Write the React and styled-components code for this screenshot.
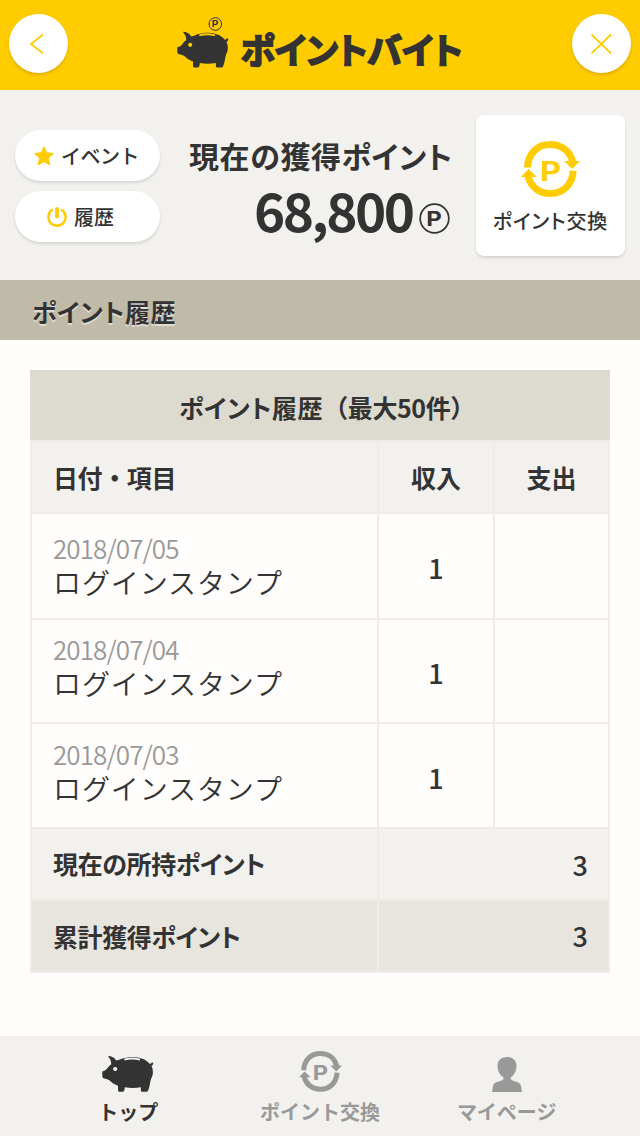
import React from "react";
import styled, { createGlobalStyle } from "styled-components";

const CSSReset = createGlobalStyle`
    * {
        margin: 0;
        padding: 0;
        box-sizing: border-box;
    }

    body {
        background: #fffefc;
        color: #333;
        font-family: "Noto Sans CJK JP", "Noto Sans", sans-serif;
    }

    button {
        border: 0;
        font-family: inherit;
        color: inherit;
    }

    svg {
        display: block;
        flex-shrink: 0;
    }
`;

const history = [
    { date: "2018/07/05", item: "ログインスタンプ", income: 1, lift: 2 },
    { date: "2018/07/04", item: "ログインスタンプ", income: 1, lift: 10 },
    { date: "2018/07/03", item: "ログインスタンプ", income: 1, lift: 10 },
];

const StyledPage = styled.div`
    width: 640px;
    height: 1136px;
    display: flex;
    flex-direction: column;
    overflow: hidden;
`;

const Label = styled.span`
    display: block;
    white-space: nowrap;
    font-size: ${({ $size }) => $size}px;
    line-height: ${({ $line }) => $line || 30}px;
    font-weight: ${({ $weight }) => $weight || 500};
    letter-spacing: ${({ $track }) => $track || 0}px;
    font-feature-settings: ${({ $palt }) => ($palt ? '"palt"' : "normal")};
`;

const StyledHeader = styled.header`
    height: 90px;
    background: #ffcc00;
    display: flex;
    justify-content: space-between;
    padding: 14px 9px 0 9px;
`;

const RoundButton = styled.button`
    width: 59px;
    height: 59px;
    border-radius: 50%;
    background: #fff;
    box-shadow: 0 2px 3px rgba(120, 80, 0, 0.25);
`;

const Brand = styled.div`
    display: flex;
    padding-top: 2px;
    width: 291px;
    gap: 12px;
    margin-left: 4px;
`;

const BrandName = styled(Label)`
    margin-top: 8px;
    -webkit-text-stroke: 1.8px #333;
    stroke-linejoin: round;
`;

const StyledStatus = styled.section`
    height: 190px;
    background: #f2f1ee;
    display: flex;
    justify-content: space-between;
    padding: 25px 15px 0;
`;

const PillColumn = styled.div`
    display: flex;
    flex-direction: column;
    gap: 10px;
    padding-top: 15px;
`;

const Pill = styled.button`
    width: 145px;
    height: 51px;
    border-radius: 26px;
    background: #fff;
    box-shadow: 0 2px 3px rgba(0, 0, 0, 0.12);
    display: flex;
    align-items: center;
    gap: 7px;
    padding-left: ${({ $indent }) => $indent}px;
`;

const Balance = styled.div`
    width: 261px;
    padding-top: 20px;
    margin-right: -3px;
`;

const Amount = styled.div`
    display: flex;
    padding-left: 65px;
    gap: 6px;
    height: 60px;
    margin-top: 4px;

    svg {
        margin-top: 24px;
    }
`;

const ExchangeCard = styled.button`
    width: 149px;
    height: 141px;
    border-radius: 8px;
    background: #fff;
    box-shadow: 0 2px 3px rgba(0, 0, 0, 0.12);
    display: flex;
    flex-direction: column;
    align-items: center;
    padding-top: 26px;
    gap: 9px;
`;

const SectionBar = styled.h2`
    height: 60px;
    background: #c0baa8;
    padding: 16px 0 0 32px;
    text-shadow: 0 2px 0 rgba(255, 255, 255, 0.5);
`;

const StyledMain = styled.main`
    flex: 1;
    padding: 30px 30px 0;
`;

const Caption = styled.div`
    height: 70px;
    background: #dddbcf;
    display: flex;
    padding: 22px 0 0 149px;
`;

const Table = styled.div`
    display: grid;
    grid-template-columns: 345px 114px 113px;
    grid-template-rows: 70px 104px 102px 103px 70px 70px;
    gap: 2px;
    padding: 2px;
    background: #edece7;
`;

const tones = {
    head: "#f2f1ee",
    plain: "#fffefc",
    total: "#e8e5df",
};

const Cell = styled.div`
    background: ${({ $tone }) => tones[$tone || "plain"]};
    grid-column: span ${({ $span }) => $span || 1};
    display: flex;
    flex-direction: column;
    justify-content: center;
    align-items: ${({ $align }) => $align || "center"};
    padding: ${({ $drop }) => $drop || 0}px 21px ${({ $lift }) => $lift || 0}px;
`;

const DateLabel = styled(Label)`
    color: #999;
`;

const StyledFooter = styled.nav`
    height: 100px;
    background: #f2f1ee;
    display: flex;
    padding: 16px 40px 0 34px;
`;

const Tab = styled.a`
    flex: 1;
    display: flex;
    flex-direction: column;
    align-items: center;
    padding-left: ${({ $nudge }) => $nudge || 0}px;
    color: ${({ $active }) => ($active ? "#333" : "#999")};
`;

const TabIcon = styled.div`
    height: 40px;
    display: flex;
    align-items: flex-end;
    margin-bottom: 5px;
`;

// corpo do porquinho, a moeda fica por conta de quem usa
function PigShape({ hole }) {
    return (
        <>
            <path
                fill="#333"
                d="M6 0C9.5 .2 12.6 1.5 14.2 4.6Q17 4.2 20.5 2.5C29 -.4 40 .6 45.3 5.4Q47.3 7.1 48 8.3Q49.2 8.2 48.5 6.6L49.8 7.2L50.7 6.2L51.4 7.6Q50.9 9.3 49.5 10C51.5 14 51.3 19 49.2 22.5C48 25 48 30 46.5 33.5Q46 35.8 44.5 35.8H40Q38.8 35.6 38.9 34.2V31.2Q31 32.5 22.8 31.3L22.5 33.8Q22 35.8 20.8 35.8H17.2Q16 35.6 16 34.2V29.8C12 28.5 8.5 25.5 7 24Q4.5 22.6 1.5 22.2Q.4 22 .3 20V15.5Q4 14.6 5.2 12.6Q7 9.7 9.3 8.2Q9.4 4 6 0Z"
            />
            <circle cx="13.2" cy="13" r="2.1" fill={hole} />
            <path d="M22.3 3.6Q30 1.4 38 3.6" fill="none" stroke={hole} strokeWidth="2" />
        </>
    );
}

// "P" largo, a linha de base fica em (x, y)
function WideP({ x, y, size, stretch = 1.2 }) {
    return (
        <g transform={`translate(${x} ${y}) scale(${stretch} 1)`}>
            <text fontFamily="Inter" fontWeight="700" fontSize={size}>P</text>
        </g>
    );
}

function BrandPig() {
    return (
        <svg width="52" height="53" viewBox="0 0 52 53" fill="#333">
            <circle cx="38.3" cy="8" r="6.3" fill="none" stroke="#333" strokeWidth="1" />
            <WideP x={34.8} y={10.9} size={8.5} />
            <g transform="translate(0 15.8)">
                <PigShape hole="#ffcc00" />
            </g>
        </svg>
    );
}

function ExchangeIcon({ size, color }) {
    return (
        <svg width={size} height={size * 56 / 59} viewBox="0 0 59 56" fill={color}>
            <g fill="none" stroke={color} strokeWidth="7">
                <path d="M6.5 26.5C6.8 13 16 3.5 29.3 3.5C41 3.5 49.5 10.5 51.8 21.5" />
                <path d="M52.2 29.7C51.5 43 42.5 52.5 29.3 52.5C18 52.5 9.3 45.5 7 34.8" />
            </g>
            <path d="M43 20H59L51.2 28ZM0 36H16L7.6 28Z" />
            <WideP x={19} y={39.5} size={27} />
        </svg>
    );
}

function PointMark() {
    return (
        <svg width="31" height="31" viewBox="0 0 31 31" fill="#333">
            <circle cx="15.5" cy="15.5" r="14.3" fill="none" stroke="#333" strokeWidth="1.7" />
            <WideP x={7.2} y={22.6} size={20} />
        </svg>
    );
}

function Header() {
    return (
        <StyledHeader>
            <RoundButton aria-label="戻る">
                <svg width="59" height="59" fill="none" stroke="#ffcc00" strokeWidth="1.8">
                    <path d="M34 20.5L22 30L34 39.3" />
                </svg>
            </RoundButton>
            <Brand>
                <BrandPig />
                <BrandName as="h1" $size={35} $line={50} $weight={700} $track={0} $palt>ポイントバイト</BrandName>
            </Brand>
            <RoundButton aria-label="閉じる">
                <svg width="59" height="59" fill="none" stroke="#ffcc00" strokeWidth="1.8">
                    <path d="M19.5 20.5L39 39.3M39 20.5L19.5 39.3" />
                </svg>
            </RoundButton>
        </StyledHeader>
    );
}

function Status() {
    return (
        <StyledStatus>
            <PillColumn>
                <Pill $indent={19}>
                    <svg width="20" height="20" viewBox="0 0 20 20" fill="#ffcc00" stroke="#ffcc00" strokeWidth="1" strokeLinejoin="round">
                        <path d="M10 .7L12.7 6.8L19.4 7.5L14.4 12L15.8 19L10 15.6L4.2 19L5.6 12L.6 7.5L7.3 6.8Z" />
                    </svg>
                    <Label $size={20} $track={-0.5}>イベント</Label>
                </Pill>
                <Pill $indent={32}>
                    <svg width="20" height="20" viewBox="0 0 20 20" fill="none" stroke="#ffcc00" strokeLinecap="round">
                        <path strokeWidth="2.4" d="M5 3.1A8.6 8.6 0 1 0 15 3.1" />
                        <path strokeWidth="3.8" d="M10 2V9.6" />
                    </svg>
                    <Label $size={20}>履歴</Label>
                </Pill>
            </PillColumn>
            <Balance>
                <Label $size={30} $line={40} $weight={700} $track={0.6} $palt>現在の獲得ポイント</Label>
                <Amount>
                    <Label $size={53} $line={60} $weight={700} $track={-2.5}>68,800</Label>
                    <PointMark />
                </Amount>
            </Balance>
            <ExchangeCard>
                <ExchangeIcon size={59} color="#ffcc00" />
                <Label $size={20} $track={0.9} $palt>ポイント交換</Label>
            </ExchangeCard>
        </StyledStatus>
    );
}

function PointTable() {
    return (
        <>
            <Caption>
                <Label $size={25} $weight={700} $track={0.6} $palt>ポイント履歴</Label>
                <Label $size={25} $weight={700} $track={-0.4}>（最大50件）</Label>
            </Caption>
            <Table>
                <Cell $tone="head" $align="flex-start"><Label $size={25} $weight={700} $track={-0.4}>日付・項目</Label></Cell>
                <Cell $tone="head"><Label $size={25} $weight={700}>収入</Label></Cell>
                <Cell $tone="head"><Label $size={25} $weight={700}>支出</Label></Cell>
                {history.map((row) => (
                    <React.Fragment key={row.date}>
                        <Cell $align="flex-start" $lift={row.lift}>
                            <DateLabel $size={26} $line={34} $weight={350} $track={-0.9}>{row.date}</DateLabel>
                            <Label $size={28} $line={34} $weight={350} $track={0.9}>{row.item}</Label>
                        </Cell>
                        <Cell $drop={4}><Label $size={27}>{row.income}</Label></Cell>
                        <Cell />
                    </React.Fragment>
                ))}
                <Cell $tone="head" $align="flex-start" $lift={3}><Label $size={25} $weight={700} $track={-0.35} $palt>現在の所持ポイント</Label></Cell>
                <Cell $tone="head" $span={2} $align="flex-end" $drop={2}><Label $size={27} $track={-1}>3</Label></Cell>
                <Cell $tone="total" $align="flex-start"><Label $size={25} $weight={700} $track={-0.4} $palt>累計獲得ポイント</Label></Cell>
                <Cell $tone="total" $span={2} $align="flex-end"><Label $size={27} $track={-1}>3</Label></Cell>
            </Table>
        </>
    );
}

function Footer() {
    return (
        <StyledFooter>
            <Tab $active $nudge={1}>
                <TabIcon>
                    <svg width="52" height="36" viewBox="0 0 52 36"><PigShape hole="#f2f1ee" /></svg>
                </TabIcon>
                <Label $size={20} $weight={700}>トップ</Label>
            </Tab>
            <Tab $nudge={5}>
                <TabIcon><ExchangeIcon size={43} color="#999" /></TabIcon>
                <Label $size={20} $weight={700}>ポイント交換</Label>
            </Tab>
            <Tab>
                <TabIcon>
                    <svg width="30" height="35" viewBox="0 0 30 35" fill="#999">
                        <path d="M15 0C21 0 24.5 3.5 24.5 9C24.5 14 22 18.5 18.8 20.3V22.3Q20 23.5 23.5 24.6Q28.5 26 29 29L30 35H0L1 29Q1.5 26 6.5 24.6Q10.5 23.5 11.4 22.3V20.3C8 18.5 5.5 14 5.5 9C5.5 3.5 9 0 15 0Z" />
                    </svg>
                </TabIcon>
                <Label $size={20} $weight={700}>マイページ</Label>
            </Tab>
        </StyledFooter>
    );
}

export default function App() {
    return (
        <>
            <CSSReset />
            <StyledPage>
                <Header />
                <Status />
                <SectionBar>
                    <Label $size={25} $weight={700} $track={0.6} $palt>ポイント履歴</Label>
                </SectionBar>
                <StyledMain>
                    <PointTable />
                </StyledMain>
                <Footer />
            </StyledPage>
        </>
    );
}
